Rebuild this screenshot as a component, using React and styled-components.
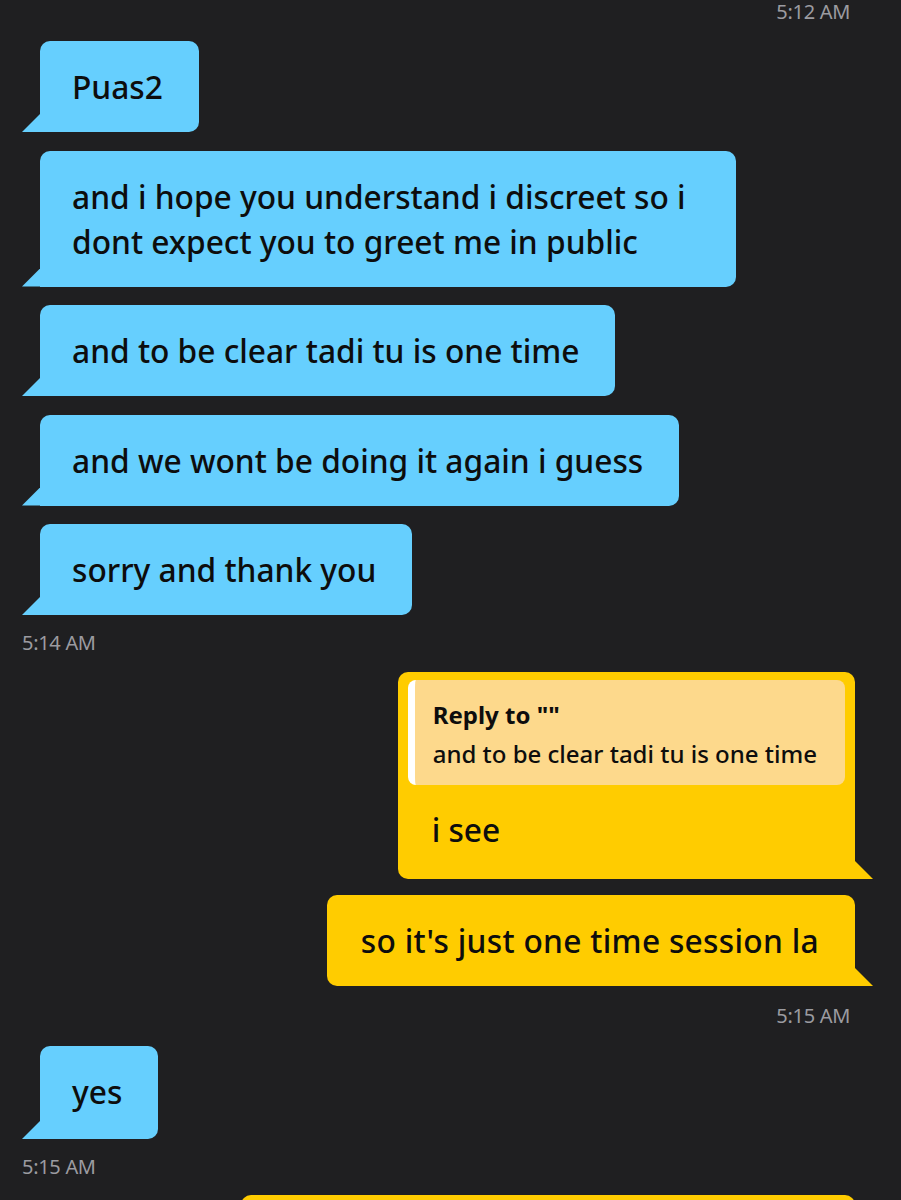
import styled, { createGlobalStyle } from "styled-components";

const GlobalStyle = createGlobalStyle`
    html, body {
        margin: 0;
        padding: 0;
        background: #1f1f21;
        overflow: hidden;
    }
    body {
        font-family: "Noto Sans", "Open Sans", sans-serif;
    }
`

const messages = [
    { type: "stamp", side: "right", text: "5:12 AM" },
    { type: "msg", side: "left", text: "Puas2" },
    { type: "msg", side: "left", text: "and i hope you understand i discreet so i dont expect you to greet me in public" },
    { type: "msg", side: "left", text: "and to be clear tadi tu is one time" },
    { type: "msg", side: "left", text: "and we wont be doing it again i guess" },
    { type: "msg", side: "left", text: "sorry and thank you" },
    { type: "stamp", side: "left", text: "5:14 AM" },
    { type: "msg", side: "right", text: "i see", reply: { title: 'Reply to ""', body: "and to be clear tadi tu is one time" } },
    { type: "msg", side: "right", text: "so it's just one time session la", gap: 16 },
    { type: "stamp", side: "right", text: "5:15 AM", gap: 18 },
    { type: "msg", side: "left", text: "yes", gap: 18, tall: true },
    { type: "stamp", side: "left", text: "5:15 AM", gap: 16 },
    { type: "msg", side: "right", text: "okay no problem, i get it, take care!", gap: 16 },
];

export default function App(){
    return(
        <>
            <GlobalStyle />
            <Thread>
                {messages.map((m, i) => m.type === "stamp" ? (
                    <Stamp key={i} side={m.side} gap={i === 0 ? 0 : m.gap ?? 16}>{m.text}</Stamp>
                ) : (
                    <Row key={i} side={m.side} gap={m.gap ?? (messages[i - 1]?.type === "stamp" ? 17 : 18.5)}>
                        <Bubble side={m.side}>
                            {m.reply && (
                                <Quote>
                                    <QuoteTitle>{m.reply.title}</QuoteTitle>
                                    <QuoteBody>{m.reply.body}</QuoteBody>
                                </Quote>
                            )}
                            <Text side={m.side} reply={!!m.reply} tall={m.tall}>{m.text}</Text>
                        </Bubble>
                    </Row>
                ))}
            </Thread>
        </>
    )
}

const Thread = styled.div`
    display: flex;
    flex-direction: column;
    height: 1200px;
`

const Stamp = styled.div`
    margin-top: ${p => p.gap}px;
    padding: 0 51px 0 22px;
    text-align: ${p => p.side === "right" ? "right" : "left"};
    font-size: 20px;
    line-height: 24px;
    letter-spacing: -0.3px;
    color: #9b9ba0;
`

const Row = styled.div`
    display: flex;
    justify-content: ${p => p.side === "right" ? "flex-end" : "flex-start"};
    padding: 0 46px 0 40px;
    margin-top: ${p => p.gap}px;
`

const Bubble = styled.div`
    position: relative;
    max-width: 696px;
    box-sizing: border-box;
    background: ${p => p.side === "right" ? "#ffcc00" : "#66cffe"};
    border-radius: ${p => p.side === "right" ? "10px 10px 0 10px" : "10px 10px 10px 0"};
    color: #0d0d0d;

    &::after {
        content: "";
        position: absolute;
        bottom: 0;
        ${p => p.side === "right" ? "right: -18px;" : "left: -18px;"}
        width: 18px;
        height: 18px;
        background: inherit;
        clip-path: ${p => p.side === "right"
            ? "polygon(0 0, 100% 100%, 0 100%)"
            : "polygon(100% 0, 100% 100%, 0 100%)"};
    }
`

const Text = styled.p`
    margin: 0;
    padding: ${p => p.reply ? "22px 32px 27px 34px" : p.side === "right" ? "23px 36px 23px 34px" : "23px 36px 23px 32px"};
    ${p => p.tall && "padding-bottom: 25px;"}
    font-size: 31.7px;
    line-height: 45px;
    font-weight: 500;
    letter-spacing: ${p => p.side === "right" && !p.reply ? "0.3px" : "0"};
`

const Quote = styled.div`
    margin: 8px 10px 0;
    padding: 15px 28px 12px 18px;
    background: #fdd98c;
    border-left: 7px solid #ffffff;
    border-radius: 8px;
`

const QuoteTitle = styled.div`
    font-size: 24px;
    line-height: 39px;
    font-weight: 700;
`

const QuoteBody = styled.div`
    font-size: 24px;
    line-height: 39px;
    font-weight: 500;
`
